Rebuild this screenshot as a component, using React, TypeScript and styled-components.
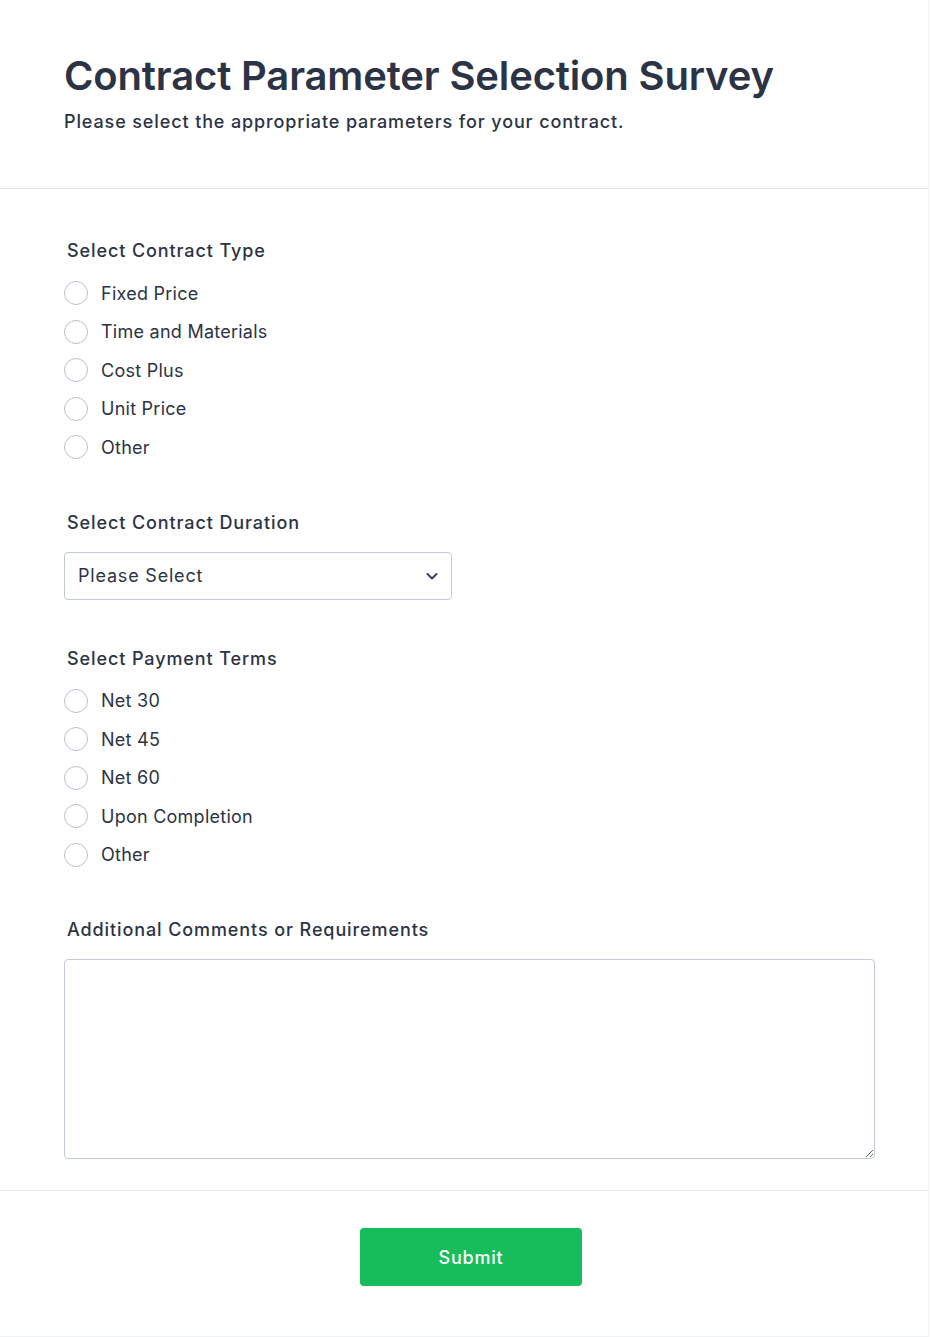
import React from "react";
import styled, { createGlobalStyle } from "styled-components";

const Global = createGlobalStyle`
  html, body { margin: 0; padding: 0; background: #ffffff; }
  body { font-family: Inter, "Noto Sans", "Liberation Sans", sans-serif; color: #2c3345; }
  * { box-sizing: border-box; }
`;

const Card = styled.div`
  width: 929px;
  min-height: 1336px;
  background: #fff;
  border-right: 1px solid #f1f2f6;
  border-bottom: 1px solid #f1f2f6;
`;

const Header = styled.header`
  padding: 52px 64px 54px 64px;
  border-bottom: 1px solid #e1e4ec;
`;

const Title = styled.h1`
  margin: 0;
  font-size: 40px;
  line-height: 48px;
  font-weight: 600;
  color: #2c3345;
  letter-spacing: -0.15px;
`;

const Subtitle = styled.p`
  margin: 10px 0 0 0;
  font-size: 18px;
  line-height: 24px;
  font-weight: 500;
  letter-spacing: 0.88px;
  color: #2c3345;
`;

const Body = styled.main`
  padding: 50px 54px 31px 64px;
  display: flex;
  flex-direction: column;
`;

const Field = styled.section<{ $gap?: number }>`
  display: flex;
  flex-direction: column;
  margin-bottom: ${(p) => p.$gap ?? 44}px;
`;

const Label = styled.div<{ $space: number }>`
  font-size: 18px;
  line-height: 24px;
  font-weight: 500;
  letter-spacing: 0.9px;
  color: #2c3345;
  padding-left: 3px;
  margin-bottom: ${(p) => p.$space}px;
`;

const RadioRow = styled.label`
  display: flex;
  align-items: center;
  height: 38.5px;
  gap: 13px;
  font-size: 18px;
  letter-spacing: 0.25px;
  color: #2c3345;
  cursor: pointer;
`;

const RadioCircle = styled.span`
  width: 24px;
  height: 24px;
  border-radius: 50%;
  border: 1px solid #b9bfcc;
  background: #fff;
  flex-shrink: 0;
`;

const SelectBox = styled.div`
  width: 388px;
  height: 48px;
  border: 1px solid #c3cad8;
  border-radius: 4px;
  display: flex;
  align-items: center;
  justify-content: space-between;
  padding: 0 12px 0 13px;
  font-size: 18px;
  letter-spacing: 0.8px;
  color: #2c3345;
`;

const TextArea = styled.textarea`
  width: 811px;
  height: 200px;
  border: 1px solid #c3cad8;
  border-radius: 4px;
  font-family: inherit;
  font-size: 16px;
  padding: 10px;
  outline: none;
`;

const Footer = styled.footer`
  border-top: 1px solid #e9ebf2;
  padding: 37px 0 50px 0;
  display: flex;
  justify-content: center;
`;

const SubmitButton = styled.button`
  width: 222px;
  height: 58px;
  margin-left: 14px;
  border: none;
  border-radius: 4px;
  background: #18bd5b;
  color: #fff;
  font-family: inherit;
  font-size: 18px;
  font-weight: 500;
  letter-spacing: 0.8px;
`;

const RadioGroup = ({ options }: { options: string[] }) => (
  <div>
    {options.map((o) => (
      <RadioRow key={o}>
        <RadioCircle />
        <span>{o}</span>
      </RadioRow>
    ))}
  </div>
);

export default function App() {
  return (
    <>
      <Global />
      <Card>
        <Header>
          <Title>Contract Parameter Selection Survey</Title>
          <Subtitle>Please select the appropriate parameters for your contract.</Subtitle>
        </Header>
        <Body>
          <Field>
            <Label $space={11}>Select Contract Type</Label>
            <RadioGroup options={["Fixed Price", "Time and Materials", "Cost Plus", "Unit Price", "Other"]} />
          </Field>
          <Field $gap={47}>
            <Label $space={17}>Select Contract Duration</Label>
            <SelectBox>
              <span>Please Select</span>
              <svg width="14" height="14" viewBox="0 0 14 14" fill="none">
                <path d="M2.5 5 L7 9.5 L11.5 5" stroke="#34405a" strokeWidth="2" strokeLinecap="round" strokeLinejoin="round" />
              </svg>
            </SelectBox>
          </Field>
          <Field>
            <Label $space={11}>Select Payment Terms</Label>
            <RadioGroup options={["Net 30", "Net 45", "Net 60", "Upon Completion", "Other"]} />
          </Field>
          <Field $gap={0}>
            <Label $space={17}>Additional Comments or Requirements</Label>
            <TextArea />
          </Field>
        </Body>
        <Footer>
          <SubmitButton>Submit</SubmitButton>
        </Footer>
      </Card>
    </>
  );
}
